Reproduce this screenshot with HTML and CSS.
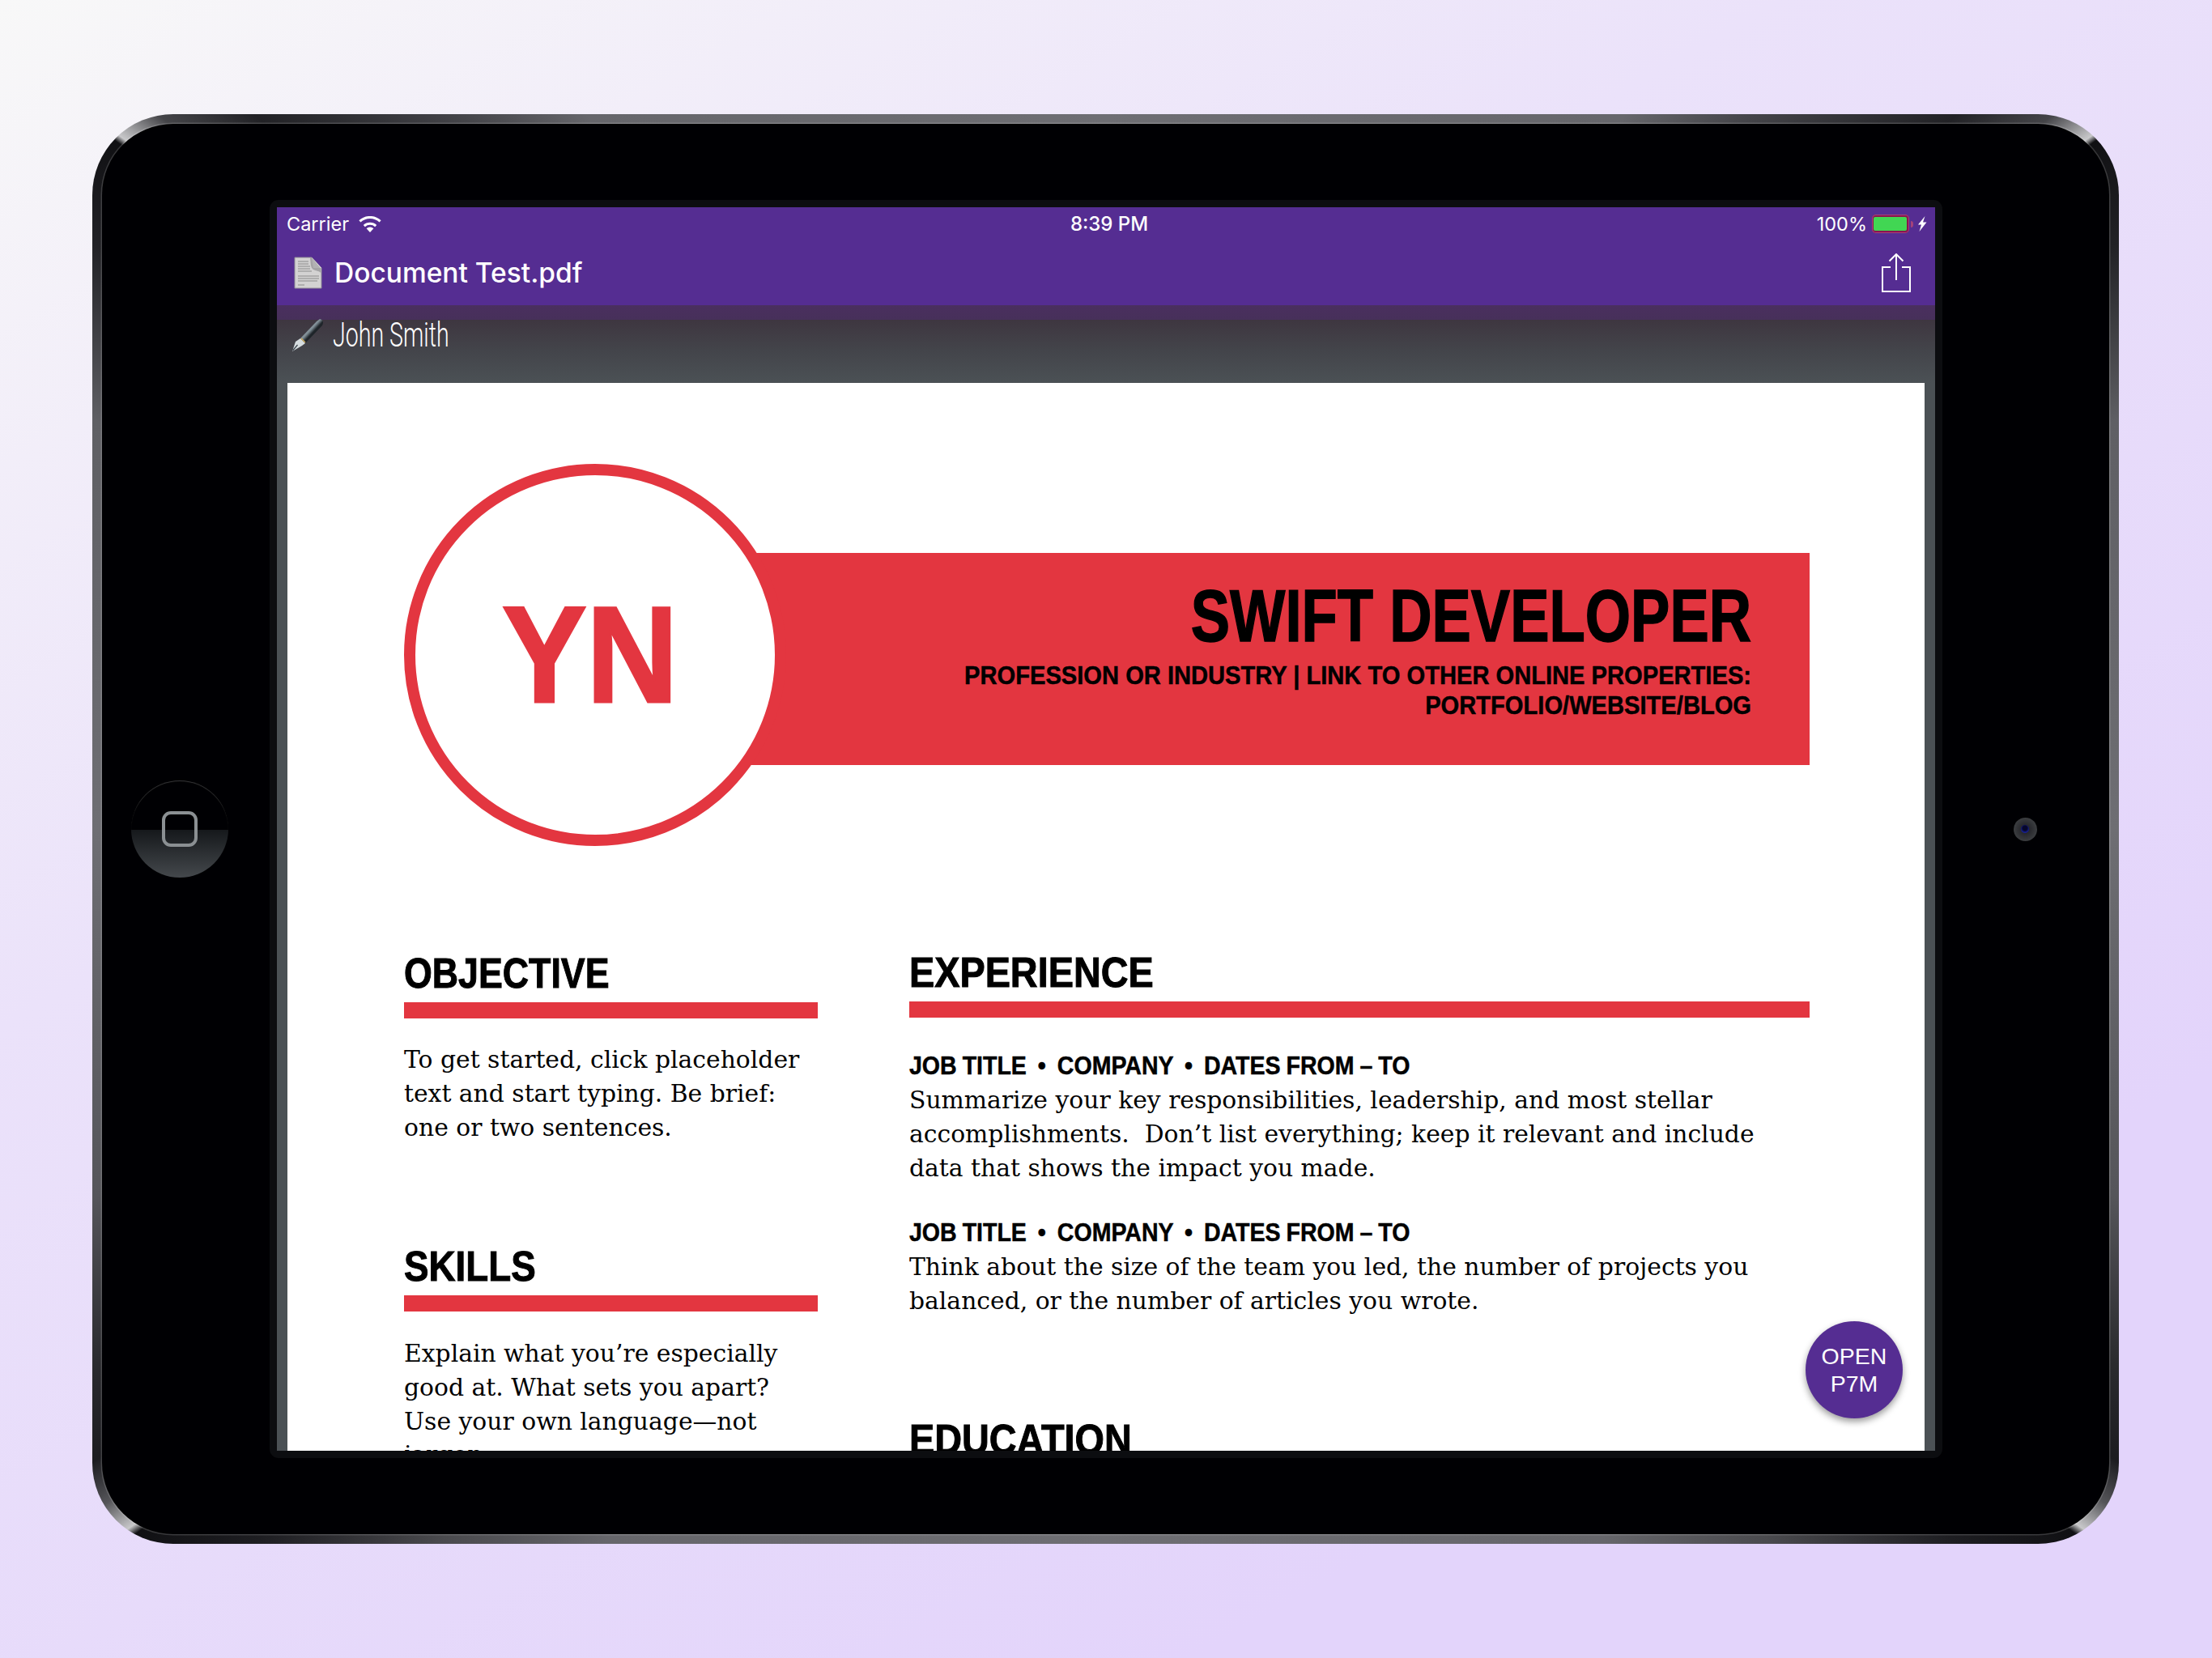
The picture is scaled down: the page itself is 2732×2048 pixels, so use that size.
FILE: index.html
```html
<!DOCTYPE html>
<html lang="en">
<head>
<meta charset="utf-8">
<title>Document Test.pdf</title>
<link rel="stylesheet" href="styles.css">
</head>
<body>
<main class="device">
  <div class="bezel">
    <div class="home"><span class="home-key"></span></div>
    <div class="frame">
      <div class="screen">
        <header class="appbar">
          <div class="status">
            <div class="status-left">
              <span>Carrier</span>
              <svg class="wifi" viewBox="0 0 28 20"><path d="M14 20 9.6 15.2a6.4 6.4 0 0 1 8.8 0Z" fill="#fff"/><path d="M6.8 12.2a10.4 10.4 0 0 1 14.4 0" fill="none" stroke="#fff" stroke-width="3"/><path d="M1.400 6.400a18.400 18.400 0 0 1 25.200 0" fill="none" stroke="#fff" stroke-width="3"/></svg>
            </div>
            <div class="status-time">8:39 PM</div>
            <div class="status-right">
              <span>100%</span>
              <span class="battery"><span class="battery-fill"></span></span>
              <span class="battery-nub"></span>
              <svg class="bolt" viewBox="0 0 12 19"><path d="M9.500 0 1 10.500h4L2.500 19 11.500 7.500H7Z" fill="#fff"/></svg>
            </div>
          </div>
          <div class="nav">
            <div class="nav-title">
              <svg class="doc-icon" viewBox="0 0 35 40">
                <path d="M1 1h21l12 13v25H1Z" fill="#d3d2d2" stroke="#8f8b95" stroke-width="1"/>
                <path d="M22 1l12 13H24Z" fill="#f2f2f2"/>
                <path d="M20 2c1 6 0 11 4 14 3 2 7 1 9 4v-6L22 1Z" fill="#7d7b80" opacity=".55"/>
                <path d="M5 6h13M5 9h13M5 12h15M5 15h15M5 18h17M5 24h26M5 27h26M5 30h24M5 35h8" stroke="#8b8b8b" stroke-width="1"/>
              </svg>
              <span>Document Test.pdf</span>
            </div>
            <svg class="share" viewBox="0 0 36 48"><path d="M11 17H1v30h34V17H25" fill="none" stroke="#fff" stroke-width="2"/><path d="M18 33V1M9.500 9.500 18 1l8.500 8.500" fill="none" stroke="#fff" stroke-width="2"/></svg>
          </div>
        </header>
        <section class="viewer">
          <div class="signature">
            <svg class="pen" viewBox="0 0 40 40">
              <defs><linearGradient id="penbody" x1="0" y1="0" x2="1" y2="1"><stop offset="0" stop-color="#c5d0d6"/><stop offset=".45" stop-color="#7f8d95"/><stop offset=".55" stop-color="#20262b"/><stop offset="1" stop-color="#0d1115"/></linearGradient></defs>
              <path d="M35 0c4 1 5 4 3 8L17 30l-6-6L31 3Z" fill="url(#penbody)"/>
              <path d="M11 24l6 6-4 3-12 7 4-12Z" fill="#d5dcdf"/>
              <path d="M1.500 39l6-7" stroke="#39424a" stroke-width="1.200"/>
              <path d="M12 24l5 5" stroke="#c9a85a" stroke-width="1.500"/>
            </svg>
            <span class="sig-name">John Smith</span>
          </div>
          <article class="page">
            <div class="resume-head">
              <div class="monogram"><span class="monogram-text">YN</span></div>
              <div class="banner">
                <h1><span class="squeeze-title">SWIFT DEVELOPER</span></h1>
                <p class="banner-sub">PROFESSION OR INDUSTRY | LINK TO OTHER ONLINE PROPERTIES:<br>PORTFOLIO/WEBSITE/BLOG</p>
              </div>
            </div>
            <div class="resume-body">
              <div class="col-left">
                <section class="block block-objective">
                  <h2><span class="squeeze squeeze-tight">OBJECTIVE</span></h2>
                  <p>To get started, click placeholder<br>text and start typing. Be brief:<br>one or two sentences.</p>
                </section>
                <section class="block block-skills">
                  <h2><span class="squeeze">SKILLS</span></h2>
                  <p>Explain what you’re especially<br>good at. What sets you apart?<br>Use your own language—not<br>jargon.</p>
                </section>
              </div>
              <div class="col-right">
                <section class="block block-experience">
                  <h2><span class="squeeze squeeze-wide">EXPERIENCE</span></h2>
                  <h3><span class="squeeze-job">JOB TITLE &nbsp;•&nbsp; COMPANY &nbsp;•&nbsp; DATES FROM – TO</span></h3>
                  <p>Summarize your key responsibilities, leadership, and most stellar<br>accomplishments.&nbsp; Don’t list everything; keep it relevant and include<br>data that shows the impact you made.</p>
                  <h3 class="job-next"><span class="squeeze-job">JOB TITLE &nbsp;•&nbsp; COMPANY &nbsp;•&nbsp; DATES FROM – TO</span></h3>
                  <p>Think about the size of the team you led, the number of projects you<br>balanced, or the number of articles you wrote.</p>
                </section>
                <section class="block">
                  <h2><span class="squeeze squeeze-wide">EDUCATION</span></h2>
                </section>
              </div>
            </div>
          </article>
          <button class="fab">OPEN<br>P7M</button>
        </section>
      </div>
    </div>
    <div class="camera"><span class="lens"></span></div>
  </div>
</main>
</body>
</html>
```
FILE: styles.css
```css
* { box-sizing: border-box; }
html, body { margin: 0; height: 100%; }
body {
  width: 2732px;
  height: 2048px;
  padding-right: 1px;
  overflow: hidden;
  display: flex;
  align-items: center;
  justify-content: center;
  background: linear-gradient(150deg, #f8f8f8 0%, #ebe2fa 35%, #e3d4fb 80%);
}
.device {
  width: 2503px;
  height: 1766px;
  padding: 12px;
  border-radius: 100px;
  background: conic-gradient(from 0deg at 50% 50%,
    #6e6e73 0deg, #66666b 36deg, #45454a 42deg, #222226 50deg, #444448 53deg, #c8c8ca 54.900deg, #101013 55.200deg, #222226 60deg, #5f5f64 68deg, #6e6e73 90deg,
    #55555a 110deg, #2a2a2e 118deg, #1c1c20 122deg, #555559 124deg, #c8c8ca 125.600deg, #101013 126deg, #1e1e22 130deg, #4a4a4e 137deg, #66666b 145deg, #6e6e73 180deg,
    #66666b 215deg, #4a4a4e 223deg, #1e1e22 230deg, #101013 234deg, #c8c8ca 234.400deg, #555559 236deg, #1c1c20 238deg, #2a2a2e 242deg, #55555a 250deg, #6e6e73 270deg,
    #5f5f64 292deg, #222226 300deg, #101013 304.800deg, #c8c8ca 305.100deg, #444448 307deg, #222226 310deg, #45454a 318deg, #66666b 324deg, #6e6e73 360deg);
}
.bezel {
  height: 100%;
  display: grid;
  grid-template-columns: 207px 2066px 206px;
  align-items: center;
  border-radius: 88px;
  background: #000003;
  box-shadow: 0 0 0 1.500px rgba(255, 255, 255, .16);
}
.home {
  width: 120px;
  height: 120px;
  margin-left: 36px;
  border-radius: 50%;
  display: flex;
  align-items: center;
  justify-content: center;
  background: linear-gradient(#000003 0, #000003 50.500%, #15181b 50.500%, #44484c 100%);
  box-shadow: inset 0 1.500px 1px -0.500px rgba(255, 255, 255, .22);
}
.home-key {
  width: 44px;
  height: 44px;
  border: 4px solid #8b9093;
  border-radius: 11px;
}
.camera {
  justify-self: center;
  width: 29px;
  height: 29px;
  margin-right: 2px;
  border-radius: 50%;
  display: flex;
  align-items: center;
  justify-content: center;
  background: radial-gradient(circle at 50% 50%, #1a1a20 0, #3b3d40 70%, #2a2b2d 100%);
}
.lens {
  width: 10px;
  height: 10px;
  border-radius: 50%;
  background: radial-gradient(circle at 50% 40%, #06062a 0, #06062a 35%, #1c28b8 80%);
}
.frame {
  width: 2066px;
  height: 1554px;
  padding: 9px;
  border-radius: 11px;
  background: #0c0d10;
}
.screen {
  width: 2048px;
  height: 1536px;
  display: flex;
  flex-direction: column;
  overflow: hidden;
  color: #fff;
}
.appbar { background: #552d92; height: 121px; font-family: Inter, "Liberation Sans", sans-serif; }
.status {
  height: 40px;
  padding: 1px 10px 0 12px;
  display: flex;
  align-items: center;
  font-size: 23.500px;
  line-height: 40px;
}
.status-left { flex: 1; display: flex; align-items: center; gap: 12px; }
.status-time { padding-left: 6px; font-size: 24px; font-weight: 500; }
.status-right { flex: 1; display: flex; align-items: center; justify-content: flex-end; }
.wifi { width: 28px; height: 20px; }
.battery {
  width: 46px;
  height: 23px;
  margin-left: 6px;
  padding: 1px;
  border-radius: 5px;
  background: #8a1450;
  box-shadow: inset 0 0 0 1px #a5427a;
  display: flex;
}
.battery-fill { flex: 1; margin: 2px 2px 2px 1px; border-radius: 2px; background: #41d653; }
.battery-nub { width: 3px; height: 8px; margin-left: 2px; margin-right: 5px; border-radius: 0 3px 3px 0; background: #a5427a; }
.bolt { width: 12px; height: 19px; }
.nav {
  height: 81px;
  padding: 0 30px 0 21px;
  display: flex;
  align-items: center;
  justify-content: space-between;
}
.nav-title { display: flex; align-items: center; gap: 15px; font-size: 33.500px; font-weight: 500; }
.doc-icon { width: 35px; height: 40px; }
.share { width: 36px; height: 48px; }
.viewer {
  position: relative;
  flex: 1;
  min-height: 0;
  display: flex;
  flex-direction: column;
  background: linear-gradient(#4a2f5f 0, #47305a 18px, #3e3640 18px, #43444a 55px, #4b5155 96px, #4b5155 100%);
}
.signature {
  height: 96px;
  flex: none;
  padding: 17px 0 0 18px;
  display: flex;
  align-items: flex-start;
  gap: 11px;
}
.pen { width: 40px; height: 40px; }
.sig-name {
  display: inline-block;
  font-family: Roboto, "Liberation Sans", sans-serif;
  font-weight: 300;
  font-size: 42px;
  line-height: 40px;
  transform: scaleX(.68);
  transform-origin: left center;
}
.page {
  flex: 1;
  min-height: 0;
  margin: 0 13px;
  padding: 100px 142px 0 144px;
  overflow: hidden;
  background: #fff;
  color: #000;
  font-family: "DejaVu Serif", serif;
}
.resume-head { display: flex; height: 472px; }
.monogram {
  position: relative;
  z-index: 1;
  flex: none;
  width: 472px;
  height: 472px;
  padding-right: 12px;
  border: 14px solid #e33640;
  border-radius: 50%;
  background: #fff;
  display: flex;
  align-items: center;
  justify-content: center;
  color: #e33640;
  font-family: "Liberation Sans", sans-serif;
  font-weight: 700;
  font-size: 168px;
  line-height: 1;
}
.monogram-text { display: inline-block; transform: scaleX(.93); -webkit-text-stroke: 3px #e33640; }
.banner {
  flex: 1;
  height: 262px;
  margin: 110px 0 0 -200px;
  padding: 34px 72px 0 0;
  background: #e33640;
  text-align: right;
  font-family: "Liberation Sans", sans-serif;
  font-weight: 700;
}
.banner h1 { margin: 0; font-size: 90px; line-height: 88px; }
.squeeze-title {
  display: inline-block;
  transform: scaleX(.805);
  transform-origin: right center;
  -webkit-text-stroke: 1.500px #000;
}
.banner-sub {
  width: 1069px;
  margin: 11px 0 0 auto;
  font-size: 32px;
  line-height: 37px;
  transform: scaleX(.91);
  transform-origin: right center;
  -webkit-text-stroke: .5px #000;
}
.resume-body {
  margin-top: 131px;
  display: grid;
  grid-template-columns: 511px 1112px;
  column-gap: 113px;
}
.block h2 {
  margin: 0;
  height: 82px;
  border-bottom: 20px solid #e33640;
  font-family: "Liberation Sans", sans-serif;
  font-size: 52px;
  line-height: 52px;
  font-weight: 700;
}
.squeeze {
  display: inline-block;
  transform: scaleX(.88);
  transform-origin: left center;
  -webkit-text-stroke: 1px #000;
}
.squeeze-tight { transform: scaleX(.86); }
.squeeze-wide { transform: scaleX(.9); }
.block p { margin: 0; font-size: 29.800px; line-height: 41.800px; }
.block h3 {
  margin: 0;
  font-family: "Liberation Sans", sans-serif;
  font-size: 31px;
  line-height: 42px;
  font-weight: 700;
}
.squeeze-job {
  display: inline-block;
  transform: scaleX(.92);
  transform-origin: left center;
  word-spacing: -1px;
  -webkit-text-stroke: .5px #000;
}
.block-objective p { margin-top: 30px; }
.block-skills p { margin-top: 31px; }
.block-objective { height: 362px; }
.block-experience { height: 577px; margin-top: -1px; }
.block-experience h3:first-of-type { margin-top: 39px; }
.block-experience .job-next { margin-top: 39px; }
.fab {
  position: absolute;
  right: 40px;
  bottom: 40px;
  width: 120px;
  height: 120px;
  padding: 0;
  border: 0;
  border-radius: 50%;
  background: #552d92;
  color: #fff;
  font-family: "Liberation Sans", sans-serif;
  font-size: 28.500px;
  line-height: 34px;
  box-shadow: 0 4px 8px rgba(0, 0, 0, .4);
}
```
